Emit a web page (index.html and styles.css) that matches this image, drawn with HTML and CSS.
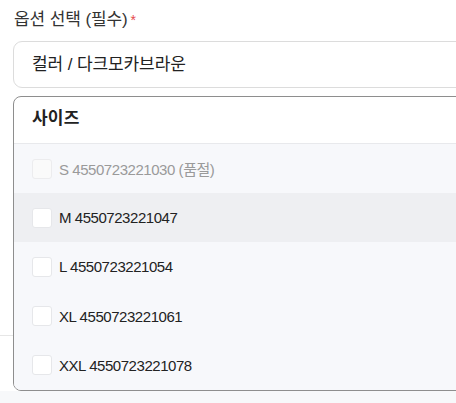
FILE: index.html
```html
<!DOCTYPE html>
<html>
<head>
  <meta name="viewport" content="width=device-width, initial-scale=1">
  <title>옵션 선택</title>
  <link rel="stylesheet" href="styles.css">
</head>
<body>
  <div class="option-field">
    <div class="field-label">옵션 선택 (필수)<span class="req">*</span></div>
    <div class="select-wrap">
      <div class="select-box">컬러 / 다크모카브라운</div>
      <div class="dropdown">
        <div class="dropdown-head">사이즈</div>
        <ul class="option-list">
          <li class="option disabled"><span class="check"></span>S 4550723221030 (품절)</li>
          <li class="option hover"><span class="check"></span>M 4550723221047</li>
          <li class="option"><span class="check"></span>L 4550723221054</li>
          <li class="option"><span class="check"></span>XL 4550723221061</li>
          <li class="option"><span class="check"></span>XXL 4550723221078</li>
        </ul>
      </div>
    </div>
    <div class="under">
      <div class="under-line"></div>
    </div>
  </div>
  <div class="page-foot"></div>
</body>
</html>
```

FILE: styles.css
```css
html, body {
  margin: 0;
  padding: 0;
  overflow: hidden;
}
body {
  font-family: "Liberation Sans", "Noto Sans CJK KR", sans-serif;
  background: #fff;
  color: #222;
  width: 456px;
  height: 403px;
}
.option-field {
  padding: 7px 0 0 13px;
}
.field-label {
  font-size: 17px;
  line-height: 26px;
  color: #333;
  padding-left: 1px;
  letter-spacing: -0.1px;
}
.req {
  color: #e5484d;
  font-size: 14px;
  margin-left: 3px;
  vertical-align: top;
}
.select-wrap {
  position: relative;
  margin-top: 8px;
  width: 480px;
}
.select-box {
  height: 45px;
  line-height: 45px;
  border: 1px solid #dcdcdc;
  border-radius: 9px;
  padding-left: 18px;
  font-size: 17px;
  letter-spacing: -0.1px;
  color: #222;
}
.dropdown {
  position: absolute;
  top: 55px;
  left: 0;
  width: 100%;
  background: #fff;
  border: 1px solid #8e8e8e;
  border-radius: 8px;
  overflow: hidden;
  z-index: 2;
}
.dropdown-head {
  height: 46px;
  line-height: 44px;
  padding-left: 18px;
  font-size: 17px;
  font-weight: bold;
  letter-spacing: 0.2px;
  border-bottom: 1px solid #e8e9ec;
}
.option-list {
  list-style: none;
  margin: 0;
  padding: 0;
}
.option {
  display: flex;
  align-items: center;
  height: 49.2px;
  padding-left: 18px;
  background: #f7f8fb;
  font-size: 15px;
  letter-spacing: -0.45px;
  color: #222;
}
.option.hover { background: #eeeff2; }
.option.disabled { color: #9a9a9a; }
.check {
  width: 18px;
  height: 18px;
  border: 1px solid #e6e7ea;
  border-radius: 3px;
  background: #fff;
  margin-right: 7px;
}
.option.disabled .check {
  background: #fafafa;
  border-color: #ececee;
}
.under {
  height: 303px;
  margin-left: -13px;
  position: relative;
}
.under-line {
  position: absolute;
  left: 0;
  right: 0;
  top: 247px;
  border-top: 1px solid #e6e6e6;
}
.page-foot {
  height: 20px;
  background: #f7f8fa;
}
```
